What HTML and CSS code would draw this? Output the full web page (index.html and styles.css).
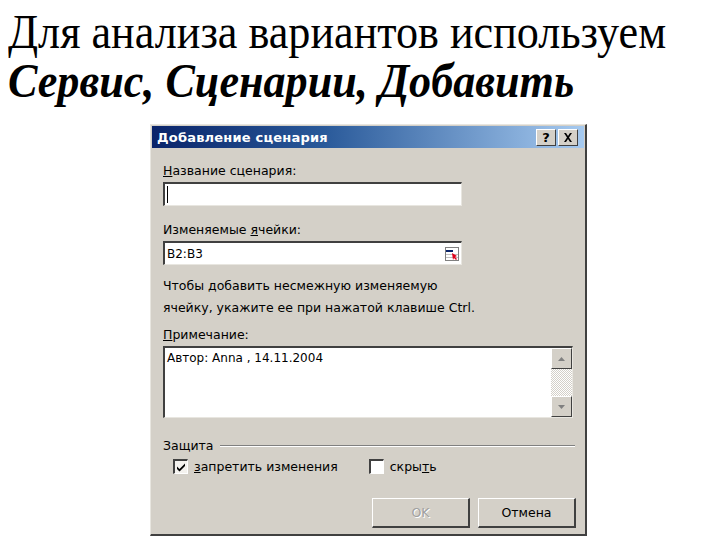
FILE: index.html
```html
<!DOCTYPE html>
<html lang="ru">
<head>
  <meta charset="UTF-8" />
  <title>Добавление сценария</title>
  <link rel="stylesheet" href="styles.css">
</head>
<body>
  <div class="slide">
    <h1 class="heading">
      <span class="line">Для анализа вариантов используем</span>
      <span class="line menu-path">Сервис, Сценарии, Добавить</span>
    </h1>

    <div class="dialog">
      <div class="titlebar">
        <span class="title">Добавление сценария</span>
        <div class="title-buttons">
          <span class="tbtn">?</span>
          <span class="tbtn">
            <svg width="10" height="9" viewBox="0 0 10 9"><path d="M1 0h2l2 3 2-3h2L6 4.5 9 9H7L5 6 3 9H1l3-4.5z" fill="#000"/></svg>
          </span>
        </div>
      </div>

      <div class="body">
        <label class="lbl"><u>Н</u>азвание сценария:</label>
        <div class="field"><span class="caret"></span></div>

        <label class="lbl lbl-gap">Изменяемые <u>я</u>чейки:</label>
        <div class="field">
          <span class="value">B2:B3</span>
          <span class="range-icon">
            <svg width="14" height="14" viewBox="0 0 14 14">
              <rect x="0.5" y="0.5" width="13" height="13" fill="#fff" stroke="#808080"/>
              <rect x="1" y="3" width="7" height="2" fill="#0a246a"/>
              <rect x="1" y="7" width="12" height="1" fill="#c0c0c0"/>
              <rect x="1" y="10" width="12" height="1" fill="#c0c0c0"/>
              <path d="M7 6l5 3-2 1 2 2-1 1-2-2-1 2z" fill="#e0001b"/>
            </svg>
          </span>
        </div>

        <p class="hint">Чтобы добавить несмежную изменяемую<br>ячейку, укажите ее при нажатой клавише Ctrl.</p>

        <label class="lbl"><u>П</u>римечание:</label>
        <div class="memo">
          <div class="memo-text">Автор: Anna , 14.11.2004</div>
          <div class="scrollbar">
            <span class="sbtn"><svg width="7" height="4" viewBox="0 0 7 4"><path d="M3.5 0L7 4H0z" fill="#808080"/></svg></span>
            <span class="track"></span>
            <span class="sbtn"><svg width="7" height="4" viewBox="0 0 7 4"><path d="M0 0h7L3.5 4z" fill="#808080"/></svg></span>
          </div>
        </div>

        <div class="group">
          <span class="group-title">Защита</span>
          <span class="group-line"></span>
        </div>
        <div class="checks">
          <label class="check">
            <span class="box checked">
              <svg width="10" height="9" viewBox="0 0 10 9"><path d="M1 3.5l2.5 2.5L9 0.5v2.5L3.5 8.5 1 6z" fill="#000"/></svg>
            </span>
            <span><u>з</u>апретить изменения</span>
          </label>
          <label class="check check-hide">
            <span class="box"></span>
            <span>скры<u>т</u>ь</span>
          </label>
        </div>

        <div class="buttons">
          <button class="btn disabled">OK</button>
          <button class="btn">Отмена</button>
        </div>
      </div>
    </div>
  </div>
</body>
</html>
```

FILE: styles.css
```css
body {
  margin: 0;
  background: #fff;
  font-family: "DejaVu Sans", Tahoma, sans-serif;
}

.slide {
  width: 720px;
  height: 540px;
  overflow: hidden;
}

.heading {
  margin: 0;
  padding: 7px 0 0 8px;
  font-family: "Liberation Serif", "Times New Roman", serif;
  font-weight: normal;
  font-size: 48px;
  line-height: 49px;
  color: #000;
}

.heading .line {
  display: block;
  transform: scaleX(0.92);
  transform-origin: left;
  white-space: nowrap;
}

.menu-path {
  font-weight: bold;
  font-style: italic;
}

.dialog {
  margin: 19px 0 0 150px;
  width: 434px;
  height: 409px;
  background: #d4d0c8;
  border-top: 1px solid #e8e6e0;
  border-left: 1px solid #e8e6e0;
  border-right: 2px solid #404040;
  border-bottom: 2px solid #404040;
  display: flex;
  flex-direction: column;
}

.titlebar {
  margin: 1px 1px 0 1px;
  height: 22px;
  background: linear-gradient(to right, #0a246a 0%, #2a5a9a 40%, #a6caf0 100%);
  display: flex;
  align-items: center;
  justify-content: space-between;
  padding: 0 6px 0 5px;
}

.title {
  color: #fff;
  font-weight: bold;
  font-size: 13px;
  letter-spacing: 0.2px;
}

.title-buttons {
  display: flex;
  gap: 2px;
}

.tbtn {
  width: 20px;
  height: 17px;
  box-sizing: border-box;
  background: #d4d0c8;
  border-top: 1px solid #fff;
  border-left: 1px solid #fff;
  border-right: 1px solid #404040;
  border-bottom: 1px solid #404040;
  display: flex;
  align-items: center;
  justify-content: center;
  font-weight: bold;
  font-size: 13px;
  color: #000;
}

.body {
  padding: 15px 0 0 12px;
  font-size: 12.5px;
  color: #000;
}

.lbl {
  display: block;
  height: 15px;
  line-height: 15px;
  margin-bottom: 4px;
}

.lbl-gap {
  margin-top: 16px;
}

.field {
  width: 299px;
  height: 24px;
  box-sizing: border-box;
  background: #fff;
  border-top: 2px solid #404040;
  border-left: 2px solid #404040;
  border-right: 1px solid #e8e6e0;
  border-bottom: 1px solid #e8e6e0;
  display: flex;
  align-items: center;
  padding-left: 2px;
}

.caret {
  width: 1px;
  height: 17px;
  background: #000;
}

.value {
  flex: 1;
  font-size: 12px;
}

.range-icon {
  margin-right: 2px;
  display: flex;
}

.hint {
  margin: 10px 0 0;
  line-height: 22px;
}

.hint + .lbl {
  margin-top: 8px;
}

.memo {
  width: 410px;
  height: 72px;
  box-sizing: border-box;
  background: #fff;
  border-top: 2px solid #404040;
  border-left: 2px solid #404040;
  border-right: 1px solid #e8e6e0;
  border-bottom: 1px solid #e8e6e0;
  display: flex;
}

.memo-text {
  flex: 1;
  padding: 3px 2px;
  font-size: 12px;
}

.scrollbar {
  width: 21px;
  display: flex;
  flex-direction: column;
  background-color: #f0eee8;
  background-image: repeating-conic-gradient(#d4d0c8 0 25%, #fff 0 50%);
  background-size: 2px 2px;
}

.sbtn {
  height: 21px;
  box-sizing: border-box;
  background: #d4d0c8;
  border-top: 1px solid #fff;
  border-left: 1px solid #fff;
  border-right: 1px solid #404040;
  border-bottom: 1px solid #404040;
  display: flex;
  align-items: center;
  justify-content: center;
}

.track {
  flex: 1;
}

.group {
  margin-top: 20px;
  display: flex;
  align-items: center;
  width: 412px;
}

.group-title {
  padding-right: 6px;
}

.group-line {
  flex: 1;
  height: 0;
  border-top: 1px solid #808080;
  border-bottom: 1px solid #fff;
}

.checks {
  display: flex;
  margin: 6px 0 0 10px;
}

.check {
  display: flex;
  align-items: center;
  gap: 6px;
}

.check-hide {
  margin-left: 31px;
}

.box {
  width: 15px;
  height: 15px;
  box-sizing: border-box;
  background: #fff;
  border-top: 2px solid #404040;
  border-left: 2px solid #404040;
  border-right: 1px solid #fff;
  border-bottom: 1px solid #fff;
  display: flex;
  align-items: center;
  justify-content: center;
}

.box.checked {
  background: #f4f2ee;
}

.buttons {
  display: flex;
  gap: 8px;
  margin: 24px 0 0 209px;
}

.btn {
  width: 98px;
  height: 30px;
  background: #d4d0c8;
  border-top: 1px solid #fff;
  border-left: 1px solid #fff;
  border-right: 2px solid #404040;
  border-bottom: 2px solid #404040;
  font-family: "DejaVu Sans", Tahoma, sans-serif;
  font-size: 12.5px;
  color: #000;
  padding: 0;
}

.btn.disabled {
  color: #a0a0a0;
  text-shadow: 1px 1px 0 #fff;
}
```
